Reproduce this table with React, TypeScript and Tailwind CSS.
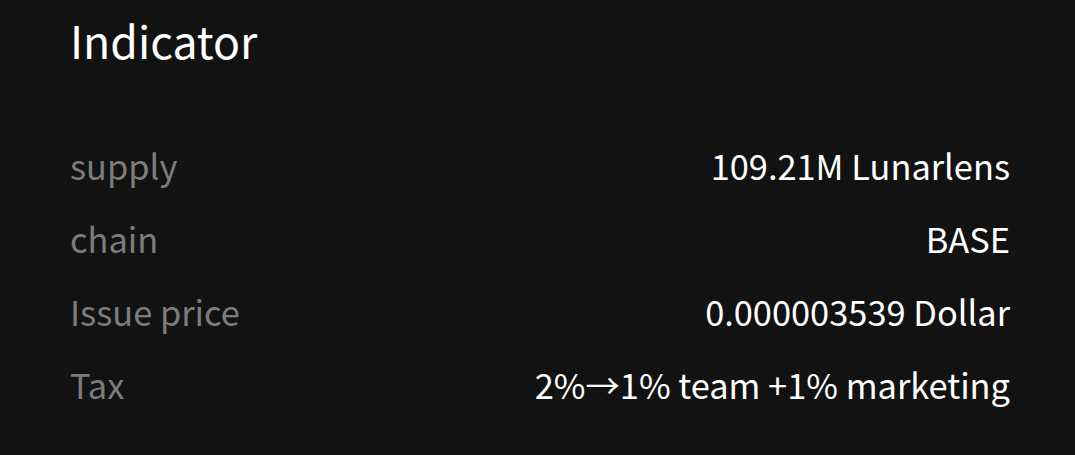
export default function App() {
  const rows: [string, string][] = [
    ["supply", "109.21M Lunarlens"],
    ["chain", "BASE"],
    ["Issue price", "0.000003539 Dollar"],
    ["Tax", "2%→1% team +1% marketing"],
  ];
  return (
    <div
      className="w-[1075px] h-[455px] bg-[#121212] pl-[70px] pr-[65px] overflow-hidden"
      style={{ fontFamily: '"Noto Sans CJK SC", "Noto Sans", sans-serif' }}
    >
      <h1 className="text-[44.6px] leading-[60px] pt-[10px] text-white">Indicator</h1>
      <div className="mt-[59px] flex flex-col">
        {rows.map(([k, v]) => (
          <div key={k} className="flex justify-between items-center h-[73px] text-[34.4px]">
            <span className="text-[#7c7c7c]">{k}</span>
            <span className="text-white">{v}</span>
          </div>
        ))}
      </div>
    </div>
  );
}
